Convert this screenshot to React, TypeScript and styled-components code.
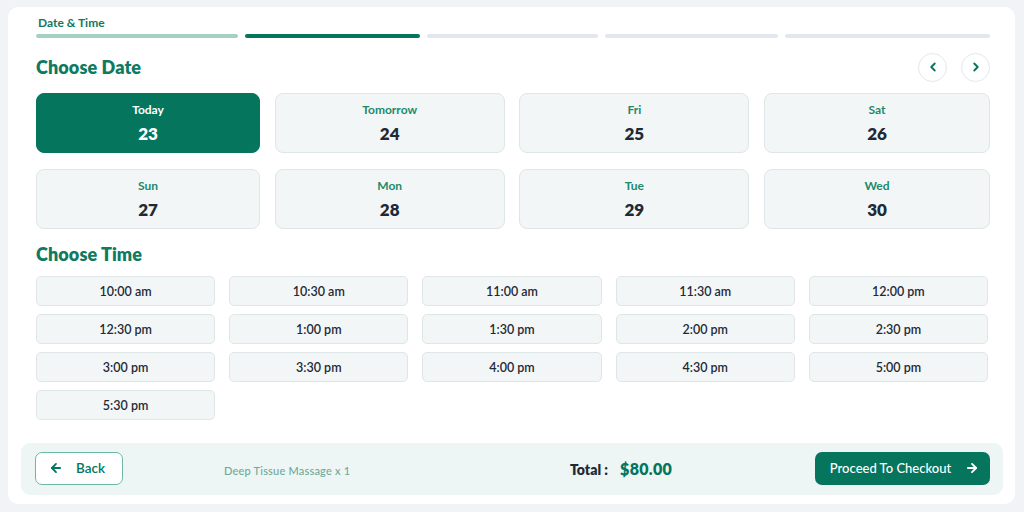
import React from 'react';
import styled, { createGlobalStyle } from 'styled-components';
import { ArrowLeft, ArrowRight, ChevronLeft, ChevronRight } from 'lucide-react';

const colors = {
  page: '#f1f3f7',
  primary: '#05755e',
  heading: '#0f7a5f',
  label: '#1d8a6c',
  text: '#1f2a37',
  tile: '#f3f6f6',
  tileBorder: '#dfe6e7',
  mint: '#eef6f5',
  muted: '#6ea99b',
  track: '#e2e6ef',
};

const GlobalStyle = createGlobalStyle`
  html, body {
    margin: 0;
    padding: 0;
    background: ${colors.page};
    font-family: Lato, "Noto Sans", sans-serif;
  }
  * { box-sizing: border-box; }
`;

const Page = styled.div`
  width: 1024px;
  height: 512px;
  padding: 7px 9px 8px 8px;
`;

const Card = styled.div`
  background: #ffffff;
  border-radius: 10px;
  height: 497px;
  padding: 8px 25px 9px 28px;
  display: flex;
  flex-direction: column;
`;

const StepLabel = styled.div`
  font-size: 12px;
  font-weight: 700;
  line-height: 16px;
  color: ${colors.heading};
  padding-left: 2px;
`;

const Steps = styled.div`
  display: grid;
  grid-template-columns: 202px 175px 171px 173px 1fr;
  gap: 7px;
  margin-top: 3px;
`;

const Step = styled.div<{ $state: 'done' | 'active' | 'todo' }>`
  height: 4px;
  border-radius: 2px;
  background: ${(p) =>
    p.$state === 'done' ? '#a3d2c5' : p.$state === 'active' ? colors.primary : colors.track};
`;

const SectionHead = styled.div<{ $top: number }>`
  display: flex;
  align-items: center;
  justify-content: space-between;
  height: 28px;
  margin-top: ${(p) => p.$top}px;
`;

const Title = styled.h2`
  margin: 0;
  font-size: 18px;
  font-weight: 800;
  color: ${colors.heading};
  letter-spacing: 0.1px;
`;

const NavGroup = styled.div`
  display: flex;
  gap: 14px;
`;

const NavButton = styled.button`
  width: 29px;
  height: 29px;
  border-radius: 50%;
  border: 1px solid #e3e8ee;
  background: #ffffff;
  color: ${colors.primary};
  display: flex;
  align-items: center;
  justify-content: center;
  padding: 0;
`;

const DateGrid = styled.div`
  display: grid;
  grid-template-columns: 224px 230px 230px 1fr;
  column-gap: 14.7px;
  row-gap: 16px;
  margin-top: 12px;
`;

const DateTile = styled.div<{ $active?: boolean }>`
  height: 60px;
  border-radius: 8px;
  background: ${(p) => (p.$active ? colors.primary : colors.tile)};
  border: 1px solid ${(p) => (p.$active ? colors.primary : colors.tileBorder)};
  display: flex;
  flex-direction: column;
  align-items: center;
  justify-content: center;
  gap: 6px;
`;

const DayName = styled.div<{ $active?: boolean }>`
  font-size: 12px;
  font-weight: 700;
  color: ${(p) => (p.$active ? '#ffffff' : colors.label)};
`;

const DayNumber = styled.div<{ $active?: boolean }>`
  font-size: 17px;
  font-weight: 800;
  color: ${(p) => (p.$active ? '#ffffff' : colors.text)};
`;

const TimeTitle = styled(Title)`
  margin-top: 13px;
  line-height: 24px;
`;

const TimeGrid = styled.div`
  display: grid;
  grid-template-columns: repeat(5, 1fr);
  column-gap: 14px;
  row-gap: 8px;
  margin-top: 10px;
  padding-right: 2px;
`;

const TimeSlot = styled.div`
  height: 30px;
  border-radius: 5px;
  background: ${colors.tile};
  border: 1px solid ${colors.tileBorder};
  display: flex;
  align-items: center;
  justify-content: center;
  font-size: 12.5px;
  font-weight: 600;
  color: ${colors.text};
`;

const Footer = styled.div`
  margin: 23px -13px 0 -15px;
  height: 52px;
  border-radius: 9px;
  background: ${colors.mint};
  padding: 9px 13px 10px 14px;
  display: flex;
  align-items: center;
`;

const BackButton = styled.button`
  width: 88px;
  height: 33px;
  border-radius: 7px;
  border: 1px solid #6db8a4;
  background: #ffffff;
  color: ${colors.primary};
  font-family: inherit;
  font-size: 13.5px;
  font-weight: 600;
  display: flex;
  align-items: center;
  justify-content: center;
  gap: 13px;
  padding: 0 4px 2px 0;
`;

const Service = styled.div`
  margin-left: 101px;
  width: 346px;
  padding-top: 4px;
  font-size: 11px;
  font-weight: 500;
  color: ${colors.muted};
  letter-spacing: 0.2px;
`;

const Total = styled.div`
  display: flex;
  align-items: baseline;
  gap: 12px;
  flex: 1;
`;

const TotalLabel = styled.span`
  font-size: 14px;
  font-weight: 800;
  color: ${colors.text};
`;

const TotalValue = styled.span`
  font-size: 16px;
  font-weight: 800;
  color: ${colors.primary};
  letter-spacing: 0.3px;
`;

const CheckoutButton = styled.button`
  width: 175px;
  height: 33px;
  border-radius: 7px;
  border: none;
  background: ${colors.primary};
  color: #ffffff;
  font-family: inherit;
  font-size: 13px;
  font-weight: 500;
  display: flex;
  align-items: center;
  justify-content: center;
  gap: 14px;
  padding: 0 0 1px 4px;
`;

const dates = [
  { day: 'Today', num: 23, active: true },
  { day: 'Tomorrow', num: 24 },
  { day: 'Fri', num: 25 },
  { day: 'Sat', num: 26 },
  { day: 'Sun', num: 27 },
  { day: 'Mon', num: 28 },
  { day: 'Tue', num: 29 },
  { day: 'Wed', num: 30 },
];

const times = [
  '10:00 am', '10:30 am', '11:00 am', '11:30 am', '12:00 pm',
  '12:30 pm', '1:00 pm', '1:30 pm', '2:00 pm', '2:30 pm',
  '3:00 pm', '3:30 pm', '4:00 pm', '4:30 pm', '5:00 pm',
  '5:30 pm',
];

const App: React.FC = () => {
  return (
    <Page>
      <GlobalStyle />
      <Card>
        <StepLabel>Date &amp; Time</StepLabel>
        <Steps>
          <Step $state="done" />
          <Step $state="active" />
          <Step $state="todo" />
          <Step $state="todo" />
          <Step $state="todo" />
        </Steps>

        <SectionHead $top={15}>
          <Title>Choose Date</Title>
          <NavGroup>
            <NavButton aria-label="Previous">
              <ChevronLeft size={14} strokeWidth={3.2} />
            </NavButton>
            <NavButton aria-label="Next">
              <ChevronRight size={14} strokeWidth={3.2} />
            </NavButton>
          </NavGroup>
        </SectionHead>

        <DateGrid>
          {dates.map((d) => (
            <DateTile key={d.num} $active={d.active}>
              <DayName $active={d.active}>{d.day}</DayName>
              <DayNumber $active={d.active}>{d.num}</DayNumber>
            </DateTile>
          ))}
        </DateGrid>

        <TimeTitle>Choose Time</TimeTitle>
        <TimeGrid>
          {times.map((t) => (
            <TimeSlot key={t}>{t}</TimeSlot>
          ))}
        </TimeGrid>

        <Footer>
          <BackButton>
            <ArrowLeft size={14} strokeWidth={3.2} />
            Back
          </BackButton>
          <Service>Deep Tissue Massage x 1</Service>
          <Total>
            <TotalLabel>Total :</TotalLabel>
            <TotalValue>$80.00</TotalValue>
          </Total>
          <CheckoutButton>
            Proceed To Checkout
            <ArrowRight size={14} strokeWidth={3.2} />
          </CheckoutButton>
        </Footer>
      </Card>
    </Page>
  );
};

export default App;
